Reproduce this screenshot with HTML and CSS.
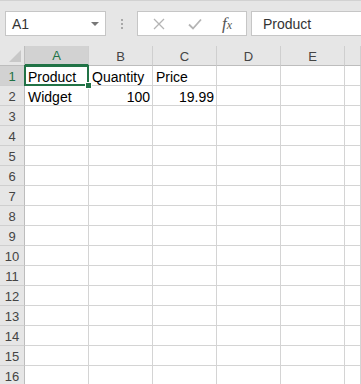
FILE: index.html
```html
<!DOCTYPE html>
<html>
<head>
  <title>Book1 - Excel</title>
  <link rel="stylesheet" href="styles.css">
</head>
<body>
  <div class="formula-area">
    <div class="name-box">
      <span>A1</span>
      <span class="arrow"></span>
    </div>
    <div class="grip">
      <span></span><span></span><span></span>
    </div>
    <div class="fx-buttons">
      <svg class="icon" width="12" height="12" viewBox="0 0 12 12">
        <path d="M1 1 L11 11 M11 1 L1 11" stroke="#b4b4b4" stroke-width="1.3" fill="none"/>
      </svg>
      <svg class="icon" width="14" height="12" viewBox="0 0 14 12">
        <path d="M1 6.5 L5 10.5 L13 1.5" stroke="#b4b4b4" stroke-width="1.8" fill="none"/>
      </svg>
      <span class="fx">f<i>x</i></span>
    </div>
    <div class="formula-input">Product</div>
  </div>

  <div class="sheet" id="sheet">
    <div class="corner"></div>
    <div class="col-head active">A</div>
    <div class="col-head">B</div>
    <div class="col-head">C</div>
    <div class="col-head">D</div>
    <div class="col-head">E</div>
    <div class="col-head"></div>
  </div>

  <script>
    const data = [
      ['Product', 'Quantity', 'Price'],
      ['Widget', 100, 19.99]
    ];
    const sheet = document.getElementById('sheet');

    for (let r = 1; r <= 16; r++) {
      const head = document.createElement('div');
      head.className = 'row-head' + (r === 1 ? ' active' : '');
      head.textContent = r;
      sheet.appendChild(head);

      for (let c = 0; c < 6; c++) {
        const cell = document.createElement('div');
        cell.className = 'cell';
        const row = data[r - 1];
        if (row && row[c] !== undefined) {
          cell.textContent = row[c];
          if (typeof row[c] === 'number') cell.classList.add('num');
        }
        if (r === 1 && c === 0) cell.classList.add('selected');
        sheet.appendChild(cell);
      }
    }
  </script>
</body>
</html>
```

FILE: styles.css
```css
body {
  margin: 0;
  padding: 0;
  font-family: "Liberation Sans", Arial, sans-serif;
  background: #fff;
  overflow: hidden;
}

.formula-area {
  display: flex;
  align-items: flex-start;
  height: 46px;
  box-sizing: border-box;
  padding: 11px 0 0 5px;
  background: #e6e6e6;
  border-top: 1px solid #d2d2d2;
}

.name-box {
  display: flex;
  align-items: center;
  justify-content: space-between;
  width: 101px;
  height: 25px;
  box-sizing: border-box;
  margin-top: -1px;
  padding: 1px 6px 0 6px;
  background: #fff;
  border: 1px solid #c6c6c6;
  font-size: 14px;
  color: #333;
}

.arrow {
  width: 0;
  height: 0;
  border-left: 4px solid transparent;
  border-right: 4px solid transparent;
  border-top: 4px solid #777;
}

.grip {
  display: flex;
  flex-direction: column;
  gap: 2px;
  width: 31px;
  align-items: center;
  padding-top: 7px;
}

.grip span {
  width: 2px;
  height: 2px;
  background: #a8a8a8;
}

.fx-buttons {
  display: flex;
  align-items: center;
  width: 110px;
  height: 25px;
  box-sizing: border-box;
  margin-top: -1px;
  padding-left: 15px;
  background: #fff;
  border: 1px solid #c6c6c6;
}

.fx-buttons .icon:first-child {
  margin-right: 23px;
}

.fx-buttons .icon + .icon {
  margin-right: 20px;
}

.fx {
  font-family: "Liberation Serif", "Times New Roman", serif;
  font-style: italic;
  font-size: 17px;
  color: #555;
}

.fx i {
  font-size: 12px;
}

.formula-input {
  flex: 1;
  height: 25px;
  box-sizing: border-box;
  margin: -1px 0 0 4px;
  padding: 4px 0 0 11px;
  background: #fff;
  border: 1px solid #c6c6c6;
  border-right: none;
  font-size: 14px;
  color: #333;
}

.sheet {
  display: grid;
  grid-template-columns: 25px repeat(5, 64px) 1fr;
  grid-auto-rows: 20px;
}

.corner,
.col-head,
.row-head {
  box-sizing: border-box;
  background: #e6e6e6;
  font-size: 13px;
  color: #444;
}

.corner {
  position: relative;
  border-right: 1px solid #bdbdbd;
  border-bottom: 1px solid #bdbdbd;
}

.corner::after {
  content: "";
  position: absolute;
  right: 3px;
  bottom: 3px;
  width: 0;
  height: 0;
  border-left: 12px solid transparent;
  border-bottom: 12px solid #c8c8c8;
}

.col-head {
  display: flex;
  align-items: center;
  justify-content: center;
  padding-top: 1px;
  border-right: 1px solid #cfcfcf;
  border-bottom: 1px solid #bdbdbd;
}

.row-head {
  display: flex;
  align-items: center;
  justify-content: center;
  padding-top: 2px;
  border-right: 1px solid #bdbdbd;
  border-bottom: 1px solid #cfcfcf;
}

.col-head.active {
  background: #d2d2d2;
  color: #217346;
  border-bottom: 2px solid #217346;
}

.row-head.active {
  background: #d2d2d2;
  color: #217346;
}

.cell {
  box-sizing: border-box;
  padding: 3px 2px 0 3px;
  border-right: 1px solid #d4d4d4;
  border-bottom: 1px solid #d4d4d4;
  font-size: 14px;
  color: #000;
  white-space: nowrap;
}

.cell.num {
  text-align: right;
}

.cell.selected {
  position: relative;
}

.cell.selected::before {
  content: "";
  position: absolute;
  top: -1px;
  left: -1px;
  right: -1px;
  bottom: -1px;
  border: 2px solid #217346;
}

.cell.selected::after {
  content: "";
  position: absolute;
  right: -4px;
  bottom: -4px;
  width: 5px;
  height: 5px;
  background: #217346;
  border: 1px solid #fff;
}
```
